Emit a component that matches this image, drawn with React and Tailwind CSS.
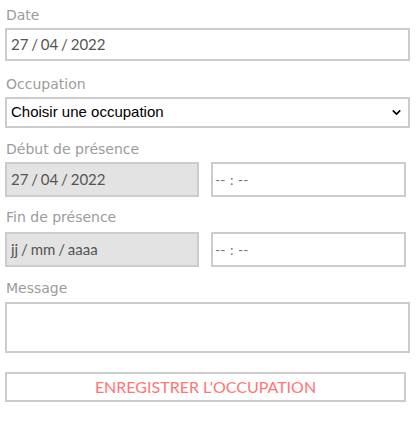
import { ChevronDown } from 'lucide-react';

const label = "block h-5 pl-[1px] text-[14px] leading-5 text-[#9c9c9c] font-['DejaVu_Sans',Verdana,sans-serif]";
const box = "border-2 border-[#cccccc] flex items-center pl-[4px] text-[15px] text-[#555] font-['Lato',sans-serif]";

function TimeBox() {
  return (
    <div className={`${box} w-[195px] h-[35px] bg-white text-[#777] !text-[14px] !pl-[2px] [word-spacing:1px]`}>
      -- : --
    </div>
  );
}

export default function App() {
  return (
    <div className="w-[416px] h-[427px] bg-white pt-[5px] pl-[5px]">
      {/* date */}
      <label className={label}>Date</label>
      <div className={`${box} [word-spacing:-1px] mt-[3px] w-[405px] h-[33px]`}>27 / 04 / 2022</div>

      {/* occupation */}
      <label className={`${label} mt-[13px]`}>Occupation</label>
      <div className="mt-[3px] w-[405px] h-[31px] border-2 border-[#cccccc] flex items-center justify-between pl-[4px] pr-[5px] text-[15px] text-black font-['Liberation_Sans',Arial,sans-serif]">
        <span>Choisir une occupation</span>
        <ChevronDown className="w-[13px] h-[13px] text-black" strokeWidth={3} />
      </div>

      {/* debut */}
      <label className={`${label} mt-[11px]`}>Début de présence</label>
      <div className="mt-[3px] flex gap-[12px]">
        <div className={`${box} [word-spacing:-1px] w-[194px] h-[35px] bg-[#e3e3e3]`}>27 / 04 / 2022</div>
        <TimeBox />
      </div>

      {/* fin */}
      <label className={`${label} mt-[10px]`}>Fin de présence</label>
      <div className="mt-[5px] flex gap-[12px]">
        <div className={`${box} [word-spacing:-1px] w-[194px] h-[35px] bg-[#e3e3e3]`}>jj / mm / aaaa</div>
        <TimeBox />
      </div>

      {/* message */}
      <label className={`${label} mt-[11px]`}>Message</label>
      <textarea className="block mt-[4px] w-[405px] h-[51px] border-2 border-[#cccccc] resize-none outline-none" />

      <button className="mt-[19px] w-[401px] h-[30px] border-2 border-[#cccccc] bg-white text-[16px] text-[#ff7575] font-['Lato',sans-serif] flex items-center justify-center">
        ENREGISTRER L'OCCUPATION
      </button>
    </div>
  );
}
